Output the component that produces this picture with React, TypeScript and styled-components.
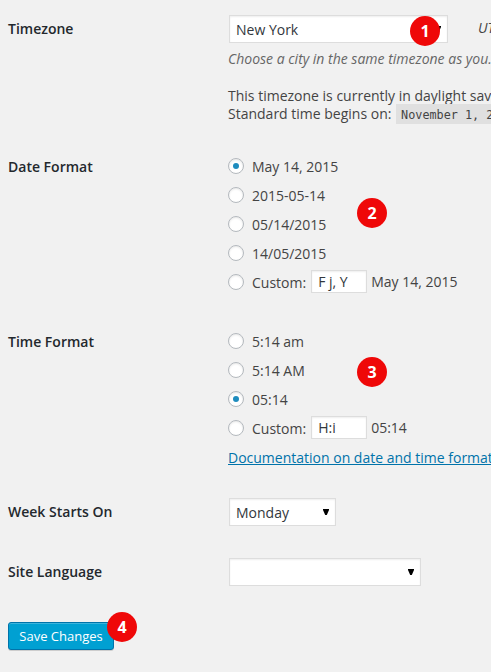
import React from 'react';
import styled, { createGlobalStyle } from 'styled-components';

const GlobalStyle = createGlobalStyle`
  * { box-sizing: border-box; }
  html, body { margin: 0; padding: 0; background: #f1f1f1; overflow: hidden; }
  body { font-family: 'Open Sans', sans-serif; font-size: 14px; line-height: 18px; color: #444; }
`;

const Page = styled.form`
  width: 491px;
  height: 672px;
  overflow: hidden;
  background: #f1f1f1;
`;

const Row = styled.section<{ $height: number }>`
  position: relative;
  display: grid;
  grid-template-columns: 220px 1fr;
  height: ${p => p.$height}px;
`;

const Heading = styled.div`
  padding: 20px 0 0 8px;
  font-weight: 600;
  color: #23282d;
  white-space: nowrap;
`;

const Field = styled.div`
  min-width: 0;
  padding: 15px 0 0 8px;
  white-space: nowrap;
`;

const Line = styled.div`
  display: flex;
  align-items: flex-start;
`;

const SelectBox = styled.div<{ $width: number }>`
  display: flex;
  align-items: center;
  justify-content: space-between;
  flex: none;
  width: ${p => p.$width}px;
  height: 28px;
  margin-left: 1px;
  padding: 1px 6px 0 6px;
  border: 1px solid #ddd;
  background: #fff;
  box-shadow: inset 0 1px 2px rgba(0, 0, 0, 0.07);
  color: #32373c;
`;

const Arrow = styled.svg`
  width: 6px;
  height: 6px;
  margin-top: -2px;
`;

const Utc = styled.em`
  margin: 4px 0 0 30px;
`;

const Description = styled.p`
  margin: 7px 0 0;
  font-style: italic;
  color: #666;
`;

const Note = styled.p`
  margin: 19px 0 0;
`;

const Code = styled.code`
  display: inline-block;
  height: 20px;
  margin: -1px 0 -1px 1px;
  padding: 2px 5px 0;
  vertical-align: top;
  background: #e0e0e0;
  font: 11.8px/18px 'DejaVu Sans Mono', monospace;
`;

const Options = styled.div`
  display: flex;
  flex-direction: column;
  gap: 7px;
  padding-top: 2px;
`;

const Option = styled.label`
  display: flex;
  align-items: center;
  height: 22px;
`;

const Radio = styled.span<{ $checked?: boolean }>`
  display: flex;
  align-items: center;
  justify-content: center;
  flex: none;
  width: 16px;
  height: 16px;
  margin: -1px 8px 0 0;
  border: 1px solid #b4b9be;
  border-radius: 50%;
  background: #fff;
  box-shadow: inset 0 1px 2px rgba(0, 0, 0, 0.1);
  &::before {
    content: '';
    display: ${p => (p.$checked ? 'block' : 'none')};
    width: 6px;
    height: 6px;
    border-radius: 50%;
    background: #1e8cbe;
  }
`;

const OptionText = styled.span`
  padding-top: 1px;
`;

const CustomInput = styled.input`
  width: 56px;
  height: 23px;
  margin: -1px 4px 0 5px;
  padding: 1px 5px 2px 6px;
  border: 1px solid #ddd;
  border-radius: 0;
  background: #fff;
  box-shadow: inset 0 1px 2px rgba(0, 0, 0, 0.07);
  font: 14px 'Open Sans', sans-serif;
  color: #32373c;
`;

const Example = styled.span`
  margin-top: -1px;
`;

const DocLink = styled.a`
  display: block;
  margin-top: 10px;
  color: #0073aa;
  text-decoration: underline;
`;

const Submit = styled.div`
  position: relative;
  padding: 19px 0 0 8px;
`;

const SaveButton = styled.button`
  display: block;
  width: 106px;
  height: 28px;
  padding: 0 0 1px;
  border: 1px solid #0073aa;
  border-radius: 3px;
  background: #00a0d2;
  box-shadow: inset 0 1px 0 rgba(120, 200, 230, 0.5), 0 1px 0 rgba(0, 0, 0, 0.15);
  color: #fff;
  font: 13px 'Open Sans', sans-serif;
  white-space: nowrap;
`;

const Badge = styled.span<{ $x: number; $y: number }>`
  position: absolute;
  left: ${p => p.$x}px;
  top: ${p => p.$y}px;
  width: 30px;
  height: 30px;
  border-radius: 50%;
  background: #ef0808;
  color: #fff;
  font-size: 16px;
  font-weight: 700;
  line-height: 30px;
  text-align: center;
`;

function Select({ width, value }: { width: number; value: string }) {
  return (
    <SelectBox $width={width}>
      <span>{value}</span>
      <Arrow viewBox="0 0 6 6" aria-hidden="true">
        <path d="M0 0h6v1L3.8 6H2.2L0 1z" fill="#000" />
      </Arrow>
    </SelectBox>
  );
}

interface FormatProps {
  options: string[];
  selected: string;
  custom: string;
  example: string;
}

function FormatOptions({ options, selected, custom, example }: FormatProps) {
  return (
    <Options>
      {options.map(option => (
        <Option key={option}>
          <Radio $checked={option === selected} />
          <OptionText>{option}</OptionText>
        </Option>
      ))}
      <Option>
        <Radio />
        <OptionText>Custom:</OptionText>
        <CustomInput defaultValue={custom} />
        <Example>{example}</Example>
      </Option>
    </Options>
  );
}

export default function App() {
  return (
    <>
      <GlobalStyle />
      <Page>
        <Row $height={138}>
          <Heading>Timezone</Heading>
          <Field>
            <Line>
              <Select width={219} value="New York" />
              <Utc>UTC time is</Utc>
            </Line>
            <Description>Choose a city in the same timezone as you.</Description>
            <Note>
              This timezone is currently in daylight saving time.
              <br />
              Standard time begins on: <Code>November 1, 2015</Code>
            </Note>
          </Field>
          <Badge $x={410} $y={16}>1</Badge>
        </Row>
        <Row $height={175}>
          <Heading>Date Format</Heading>
          <Field>
            <FormatOptions
              options={['May 14, 2015', '2015-05-14', '05/14/2015', '14/05/2015']}
              selected="May 14, 2015"
              custom="F j, Y"
              example="May 14, 2015"
            />
          </Field>
          <Badge $x={357} $y={60}>2</Badge>
        </Row>
        <Row $height={170}>
          <Heading>Time Format</Heading>
          <Field>
            <FormatOptions
              options={['5:14 am', '5:14 AM', '05:14']}
              selected="05:14"
              custom="H:i"
              example="05:14"
            />
            <DocLink>Documentation on date and time formatting</DocLink>
          </Field>
          <Badge $x={357} $y={44}>3</Badge>
        </Row>
        <Row $height={60}>
          <Heading>Week Starts On</Heading>
          <Field>
            <Select width={107} value="Monday" />
          </Field>
        </Row>
        <Row $height={60}>
          <Heading>Site Language</Heading>
          <Field>
            <Select width={192} value="" />
          </Field>
        </Row>
        <Submit>
          <SaveButton type="button">Save Changes</SaveButton>
          <Badge $x={107} $y={9}>4</Badge>
        </Submit>
      </Page>
    </>
  );
}
